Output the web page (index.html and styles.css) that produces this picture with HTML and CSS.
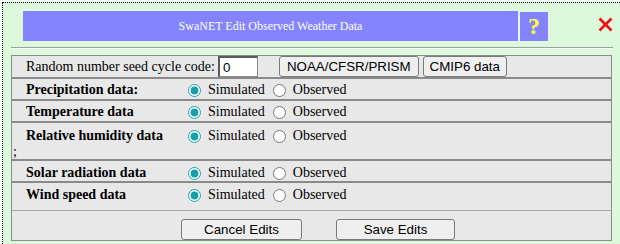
FILE: index.html
```html
<!DOCTYPE html>
<html>
<head>
<meta charset="utf-8">
<title>SwaNET Edit Observed Weather Data</title>
<link rel="stylesheet" href="styles.css">
</head>
<body>
<div class="frame">
  <div class="dialog">
    <div class="header">
      <div class="titlebox">
        <div class="title">SwaNET Edit Observed Weather Data</div>
        <div class="help">?</div>
      </div>
      <svg class="close" width="15" height="15" viewBox="0 0 15 15" aria-label="Close">
        <line x1="1.5" y1="1.5" x2="13.5" y2="13.5"/>
        <line x1="13.5" y1="1.5" x2="1.5" y2="13.5"/>
      </svg>
    </div>
    <div class="rule"></div>
    <div class="panel">
      <div class="row seed">
        <span class="seed-label">Random number seed cycle code:</span>
        <input class="seed-input" type="text" value="0">
        <button class="btn src-first">NOAA/CFSR/PRISM</button>
        <button class="btn src-next">CMIP6 data</button>
      </div>
      <div class="row data shift1">
        <span class="label">Precipitation data:</span>
        <span class="choices"><input class="radio" type="radio" name="p" checked><span class="opt">Simulated</span><input class="radio second" type="radio" name="p"><span class="opt">Observed</span></span>
      </div>
      <div class="row data shift1">
        <span class="label">Temperature data</span>
        <span class="choices"><input class="radio" type="radio" name="t" checked><span class="opt">Simulated</span><input class="radio second" type="radio" name="t"><span class="opt">Observed</span></span>
      </div>
      <div class="row data tall">
        <div class="line">
          <span class="label">Relative humidity data</span>
          <span class="choices"><input class="radio" type="radio" name="h" checked><span class="opt">Simulated</span><input class="radio second" type="radio" name="h"><span class="opt">Observed</span></span>
        </div>
        <div class="stray">;</div>
      </div>
      <div class="row data shift2">
        <span class="label">Solar radiation data</span>
        <span class="choices"><input class="radio" type="radio" name="s" checked><span class="opt">Simulated</span><input class="radio second" type="radio" name="s"><span class="opt">Observed</span></span>
      </div>
      <div class="row data last">
        <span class="label">Wind speed data</span>
        <span class="choices"><input class="radio" type="radio" name="w" checked><span class="opt">Simulated</span><input class="radio second" type="radio" name="w"><span class="opt">Observed</span></span>
      </div>
      <div class="actions">
        <button class="btn wide">Cancel Edits</button>
        <button class="btn wide save">Save Edits</button>
      </div>
    </div>
  </div>
</div>
</body>
</html>
```

FILE: styles.css
```css
* { box-sizing: border-box; }
html, body {
  margin: 0;
  padding: 0;
  background: #f4fbf4;
  overflow: hidden;
}
body {
  padding: 2px 0 0 2px;
  font-family: "Liberation Serif", "Times New Roman", serif;
  font-size: 14px;
  color: #000;
}
.frame {
  border-top: 1px dotted #000;
  border-left: 1px dotted #000;
  background: #dcf9dc;
  height: 242px;
}
.dialog {
  margin-left: 8px;
  padding-top: 8px;
  width: 602px;
}
.header {
  display: flex;
  align-items: flex-start;
  height: 30px;
}
.titlebox {
  display: flex;
  margin-left: 12px;
  gap: 2px;
}
.title {
  width: 495px;
  height: 30px;
  background: #8484ff;
  color: #fff;
  font-size: 12px;
  line-height: 30px;
  text-align: center;
  box-shadow: 0 0 0 1px #eaf3f8;
}
.help {
  width: 28px;
  height: 29px;
  margin-top: 1px;
  background: #8484ff;
  color: #ffff3c;
  font-weight: bold;
  font-size: 24px;
  line-height: 29px;
  text-align: center;
  box-shadow: 0 0 0 1px #eaf3f8;
}
.close {
  margin-left: 50px;
  margin-top: 6px;
  stroke: #f01010;
  stroke-width: 2.6;
}
.rule {
  margin-top: 6px;
  height: 2px;
  border-top: 1px solid #a0a0a0;
  border-bottom: 1px solid #f6fcf6;
}
.panel {
  margin-top: 6px;
  width: 601px;
  border: 1px solid #8c8c8c;
  background: #e8e8e8;
}
.row {
  display: flex;
  align-items: center;
  padding-left: 14px;
}
.seed {
  height: 21px;
}
.seed-label {
  white-space: nowrap;
}
.seed-input {
  margin: 0 0 0 3px;
  width: 40px;
  height: 21px;
  padding: 0 3px;
  border: 1px solid #8a8a8a;
  border-top: 2px solid #5a5a5a;
  border-left: 2px solid #5a5a5a;
  background: #fff;
  font-family: "Liberation Sans", Arial, sans-serif;
  font-size: 13.333px;
  color: #000;
}
.btn {
  height: 21px;
  padding: 0 6px;
  border: 1px solid #7a7a7a;
  border-radius: 3px;
  background: #efefef;
  font-family: "Liberation Sans", Arial, sans-serif;
  font-size: 13.333px;
  color: #000;
  line-height: 19px;
}
.src-first { margin-left: 21px; padding: 0 7px; }
.src-next { margin-left: 4px; }
.data {
  height: 22px;
  border-top: 2px solid #8a8a8a;
  align-items: flex-start;
}
.data .label,
.data .choices {
  height: 20px;
  display: flex;
  align-items: center;
}
.data.shift1 { padding-top: 1px; }
.data.shift2 { padding-top: 2px; }
.data.tall {
  height: 38px;
  flex-direction: column;
  align-items: stretch;
  padding-left: 0;
}
.data.last {
  height: 29px;
  padding-top: 2px;
}
.line {
  display: flex;
  align-items: center;
  height: 20px;
  margin-top: 3px;
  padding-left: 14px;
}
.stray {
  height: 12px;
  line-height: 12px;
  padding-left: 1px;
  margin-top: 0;
}
.label {
  width: 157px;
  flex-shrink: 0;
  font-weight: bold;
  white-space: nowrap;
}
.choices {
  white-space: nowrap;
}
.radio {
  width: 13px;
  height: 13px;
  margin: 0 7px 0 5px;
  accent-color: #17a0aa;
}
.radio.second {
  margin-left: 8px;
}
.actions {
  display: flex;
  height: 30px;
  padding: 8px 0 0 169px;
  border-top: 1px solid #a8a8a8;
  gap: 34px;
}
.btn.wide {
  width: 121px;
}
.btn.save {
  width: 119px;
}
```
